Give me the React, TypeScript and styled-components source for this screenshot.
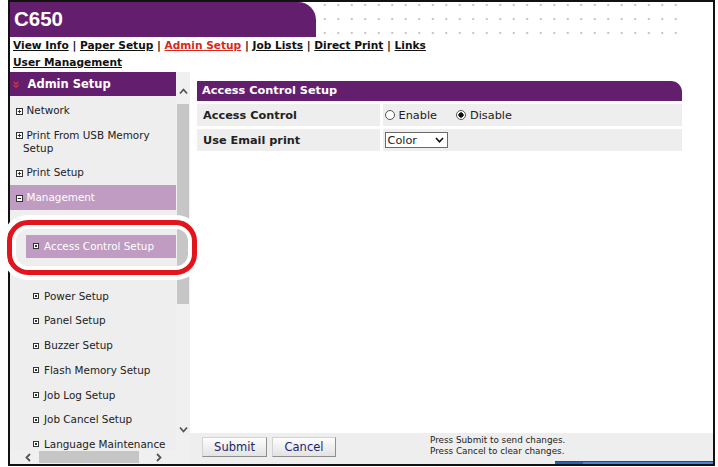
import styled, { createGlobalStyle } from "styled-components";

const colors = {
  purple: "#631f6e",
  lilac: "#c09cc3",
  panel: "#eeeeee",
  track: "#f0f0f0",
  thumb: "#c6c6c6",
  text: "#222222",
  link: "#d8281c",
  ring: "#e3141c",
  navy: "#1d1f6b",
  arrow: "#555555",
};

const GlobalStyle = createGlobalStyle`
  html, body {
    margin: 0;
    padding: 0;
    background: #fff;
  }
  body {
    font-family: "DejaVu Sans", Verdana, sans-serif;
    color: ${colors.text};
  }
  * {
    box-sizing: border-box;
  }
`;

const Frame = styled.div`
  width: 707px;
  height: 466px;
  margin-left: 8px;
  border: 2px solid #111;
  display: flex;
  flex-direction: column;
`;

const Header = styled.header`
  display: flex;
  height: 34.5px;
  flex-shrink: 0;
`;

const Brand = styled.div`
  width: 306px;
  background: ${colors.purple};
  border-top-right-radius: 18px;
  display: flex;
  align-items: center;
  padding-left: 4px;
  color: #fff;
  font: bold 20.5px "Liberation Sans", Arial, sans-serif;
`;

const DotField = styled.div`
  width: 362px;
  margin-left: 2.25px;
  background-image: radial-gradient(circle at center, #c4c4c4 0 0.9px, transparent 1.4px);
  background-size: 13.5px 14px;
  background-position: 0 -4px;
`;

const Nav = styled.nav`
  height: 35.5px;
  flex-shrink: 0;
  padding-left: 3px;
  font-size: 10.6px;
  font-weight: bold;
  line-height: 17px;
  color: #111;
`;

const NavLink = styled.a<{ $active?: boolean }>`
  color: ${(p) => (p.$active ? colors.link : "#111")};
  text-decoration: underline;
  cursor: pointer;
`;

const Body = styled.div`
  position: relative;
  flex: 1;
  min-height: 0;
  display: grid;
  grid-template-columns: 180px 1fr;
`;

/* ---------- sidebar ---------- */

const Sidebar = styled.aside`
  display: grid;
  grid-template-columns: 166px 14px;
  grid-template-rows: 1fr 14px;
  min-height: 0;
  background: ${colors.panel};
`;

const Menu = styled.div`
  overflow: hidden;
  font-size: 10.4px;
  line-height: 13px;
`;

const MenuHead = styled.div`
  height: 24px;
  margin-bottom: 2px;
  background: ${colors.purple};
  color: #fff;
  font-size: 11.5px;
  font-weight: bold;
  display: flex;
  align-items: center;
  padding-left: 3px;
  gap: 8.5px;
`;

const MenuItem = styled.div<{ $selected?: boolean }>`
  padding: 6px 4px 5.7px 13px;
  text-indent: -7.5px;
  background: ${(p) => (p.$selected ? colors.lilac : "transparent")};
  color: ${(p) => (p.$selected ? "#fff" : colors.text)};

  svg {
    display: inline-block;
    vertical-align: -0.5px;
    margin-right: 4px;
  }
`;

const SubItem = styled.div`
  margin-left: 16px;
  padding: 6px 4px 5.7px 7px;
  display: flex;
  align-items: center;
  gap: 5px;
  white-space: nowrap;
  color: ${colors.text};
`;

const CurrentSubItem = styled(SubItem)`
  margin-top: 25px;
  margin-bottom: 26px;
  padding: 5px 4px 5px 7px;
  background: ${colors.lilac};
  color: #fff;
`;

const VScroll = styled.div`
  display: flex;
  flex-direction: column;
  align-items: center;
  padding-top: 16px;
  background: ${colors.track};
`;

const VThumb = styled.div`
  width: 12px;
  height: 200px;
  margin-top: 9px;
  background: ${colors.thumb};
`;

const DownArrow = styled.div`
  margin-top: auto;
  margin-bottom: 17px;
  display: flex;
`;

const HScroll = styled.div`
  display: flex;
  align-items: center;
  padding-left: 15px;
  background: ${colors.track};
`;

const HThumb = styled.div`
  width: 100px;
  height: 12px;
  margin: 0 17px 0 8px;
  background: ${colors.thumb};
`;

const Corner = styled.div`
  background: ${colors.track};
`;

/* annotation drawn over the page */
const Highlight = styled.div`
  position: absolute;
  left: -3px;
  top: 148px;
  width: 190px;
  height: 55px;
  border: 5.5px solid ${colors.ring};
  border-radius: 21px;
  box-shadow: inset 0 0 0 4px #fff, 0 0 0 5px #fff;
  pointer-events: none;
`;

/* ---------- main ---------- */

const Main = styled.main`
  display: grid;
  grid-template-rows: 1fr 31px;
  background: #fff;
  min-width: 0;
`;

const Content = styled.section`
  padding: 9px 31px 0 7px;
`;

const Title = styled.div`
  height: 20px;
  padding-left: 5px;
  background: ${colors.purple};
  border-top-right-radius: 11px;
  color: #fff;
  font-size: 11.3px;
  font-weight: bold;
  line-height: 20px;
`;

const Table = styled.div`
  display: grid;
  grid-template-columns: 183px 1fr;
  grid-auto-rows: 22px;
  gap: 3px;
  margin-top: 3px;
`;

const Label = styled.div`
  background: ${colors.panel};
  display: flex;
  align-items: center;
  padding-left: 6px;
  font-size: 11.3px;
  font-weight: bold;
`;

const Value = styled.div`
  background: ${colors.panel};
  display: flex;
  align-items: center;
  padding-left: 1.5px;
  font-size: 11.3px;
`;

const RadioOption = styled.label`
  display: inline-flex;
  align-items: center;
  gap: 4px;
  margin-right: 19px;
`;

const Radio = styled.span<{ $checked?: boolean }>`
  width: 10px;
  height: 10px;
  border: 1px solid #555;
  border-radius: 50%;
  background: ${(p) =>
    p.$checked
      ? "radial-gradient(circle, #111 0 2.4px, #fff 2.9px)"
      : "#fff"};
`;

const Select = styled.div`
  width: 63px;
  height: 16px;
  border: 1px solid #6a6a6a;
  background: #fff;
  display: flex;
  align-items: center;
  justify-content: space-between;
  padding: 0 3px 0 2px;
  font-size: 11.3px;
`;

const Footer = styled.footer`
  background: ${colors.panel};
  display: flex;
  flex-direction: column;
`;

const Controls = styled.div`
  flex: 1;
  display: flex;
  align-items: flex-start;
  padding: 1.5px 0 0 12px;
`;

const Button = styled.button<{ $wide?: boolean }>`
  width: ${(p) => (p.$wide ? 65 : 64)}px;
  height: 20px;
  margin: 2.5px 5px 0 0;
  padding: 0;
  border: 1px solid;
  border-color: #d2d2d2 #8e8e8e #8e8e8e #d2d2d2;
  background: linear-gradient(#fdfdfd, #e2e2e2);
  color: ${colors.navy};
  font: 11.5px "DejaVu Sans", Verdana, sans-serif;
`;

const Help = styled.p`
  margin: 0 0 0 89px;
  font-size: 8.8px;
  line-height: 11px;
  color: #222;
`;

const InfoTab = styled.div`
  align-self: flex-end;
  width: 158px;
  height: 3px;
  border-top: 1px solid #1e4b96;
  background: linear-gradient(90deg, #2f5fae 0 18%, #4d82d4 18%);
`;

/* ---------- icons ---------- */

const BoxIcon = ({ kind }: { kind: "plus" | "minus" }) => (
  <svg width="7" height="7" viewBox="0 0 7 7">
    <rect x="0.5" y="0.5" width="6" height="6" fill="#fff" stroke="#333" />
    <path d="M1.8 3.5h3.4" stroke="#333" />
    {kind === "plus" && <path d="M3.5 1.8v3.4" stroke="#333" />}
  </svg>
);

const DotIcon = () => (
  <svg width="6" height="6" viewBox="0 0 6 6">
    <rect x="0.5" y="0.5" width="5" height="5" fill="#fff" stroke="#333" />
    <rect x="2" y="2" width="2" height="2" fill="#333" />
  </svg>
);

const DoubleChevron = () => (
  <svg width="6" height="7" viewBox="0 0 6 7">
    <path d="M0.6 0.6L3 3L5.4 0.6M0.6 3.8L3 6.2L5.4 3.8" fill="none" stroke="#e0302a" strokeWidth="1.3" />
  </svg>
);

const Chevron = ({ dir }: { dir: "up" | "down" | "left" | "right" }) => {
  const d = {
    up: "M1 5.5L4.5 1.5L8 5.5",
    down: "M1 1.5L4.5 5.5L8 1.5",
    left: "M5 1L1.5 4.5L5 8",
    right: "M1 1L4.5 4.5L1 8",
  }[dir];
  const vertical = dir === "up" || dir === "down";
  return (
    <svg width={vertical ? 9 : 6} height={vertical ? 7 : 9} viewBox={vertical ? "0 0 9 7" : "0 0 6 9"}>
      <path d={d} fill="none" stroke={colors.arrow} strokeWidth="1.8" />
    </svg>
  );
};

const SelectChevron = () => (
  <svg width="9" height="6" viewBox="0 0 9 6">
    <path d="M1 1L4.5 4.8L8 1" fill="none" stroke="#111" strokeWidth="1.6" />
  </svg>
);

const navLinks = ["View Info", "Paper Setup", "Admin Setup", "Job Lists", "Direct Print", "Links"];

const topMenu = [
  { text: "Network" },
  { text: "Print From USB Memory Setup" },
  { text: "Print Setup" },
];

const subMenu = [
  "Power Setup",
  "Panel Setup",
  "Buzzer Setup",
  "Flash Memory Setup",
  "Job Log Setup",
  "Job Cancel Setup",
  "Language Maintenance",
];

function App() {
  return (
    <>
      <GlobalStyle />
      <Frame>
        <Header>
          <Brand>C650</Brand>
          <DotField />
        </Header>
        <Nav>
          {navLinks.map((link, i) => (
            <span key={link}>
              {i > 0 && " | "}
              <NavLink $active={link === "Admin Setup"}>{link}</NavLink>
            </span>
          ))}
          <br />
          <NavLink>User Management</NavLink>
        </Nav>
        <Body>
          <Sidebar>
            <Menu>
              <MenuHead>
                <DoubleChevron />
                Admin Setup
              </MenuHead>
              {topMenu.map((item) => (
                <MenuItem key={item.text}>
                  <BoxIcon kind="plus" />
                  {item.text}
                </MenuItem>
              ))}
              <MenuItem $selected>
                <BoxIcon kind="minus" />
                Management
              </MenuItem>
              <CurrentSubItem>
                <DotIcon />
                Access Control Setup
              </CurrentSubItem>
              {subMenu.map((item) => (
                <SubItem key={item}>
                  <DotIcon />
                  {item}
                </SubItem>
              ))}
            </Menu>
            <VScroll>
              <Chevron dir="up" />
              <VThumb />
              <DownArrow>
                <Chevron dir="down" />
              </DownArrow>
            </VScroll>
            <HScroll>
              <Chevron dir="left" />
              <HThumb />
              <Chevron dir="right" />
            </HScroll>
            <Corner />
          </Sidebar>
          <Main>
            <Content>
              <Title>Access Control Setup</Title>
              <Table>
                <Label>Access Control</Label>
                <Value>
                  <RadioOption>
                    <Radio />
                    Enable
                  </RadioOption>
                  <RadioOption>
                    <Radio $checked />
                    Disable
                  </RadioOption>
                </Value>
                <Label>Use Email print</Label>
                <Value>
                  <Select>
                    Color
                    <SelectChevron />
                  </Select>
                </Value>
              </Table>
            </Content>
            <Footer>
              <Controls>
                <Button $wide>Submit</Button>
                <Button>Cancel</Button>
                <Help>
                  Press Submit to send changes.
                  <br />
                  Press Cancel to clear changes.
                </Help>
              </Controls>
              <InfoTab />
            </Footer>
          </Main>
          <Highlight />
        </Body>
      </Frame>
    </>
  );
}

export default App;
